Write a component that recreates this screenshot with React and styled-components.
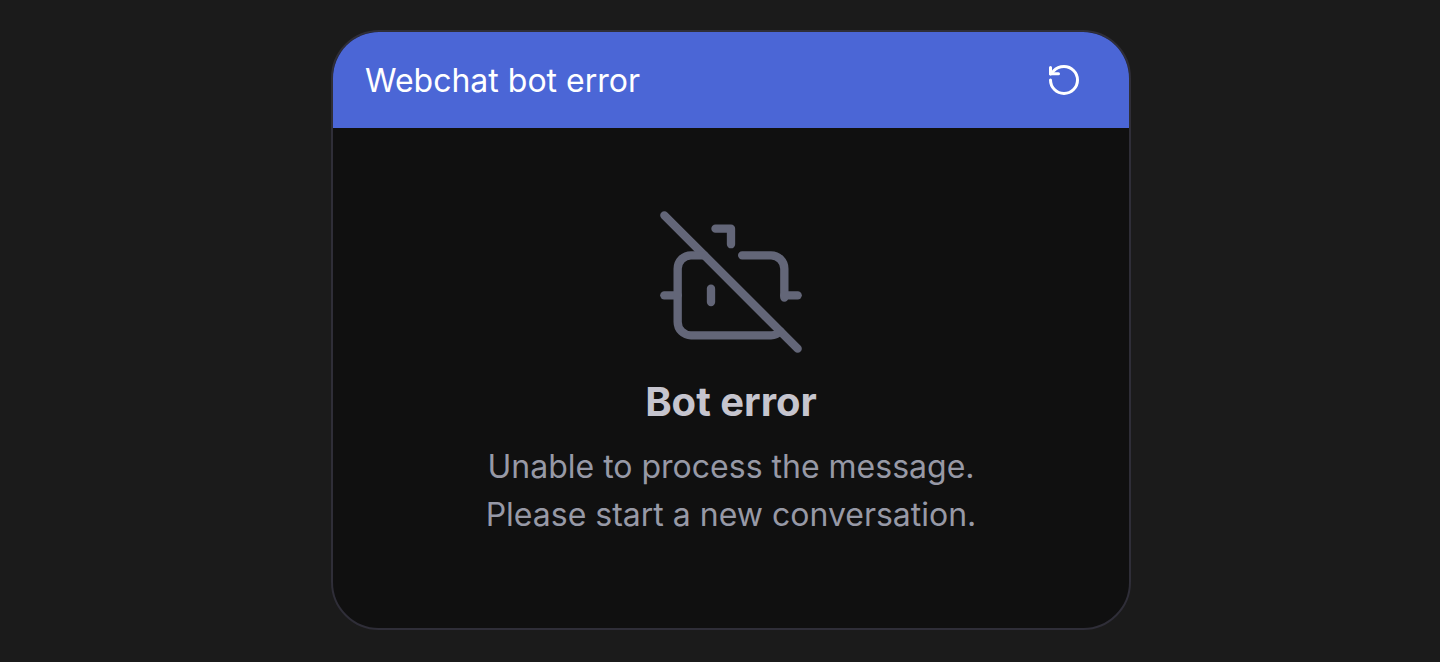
import React from "react";
import styled, { createGlobalStyle } from "styled-components";
import { BotOff } from "lucide-react";

const GlobalStyle = createGlobalStyle`
  *, *::before, *::after { box-sizing: border-box; }
  body {
    margin: 0;
    background: #1b1b1b;
    font-family: Inter, "Liberation Sans", sans-serif;
  }
`;

const Page = styled.main`
  display: flex;
  justify-content: center;
  min-height: 100vh;
  padding: 30px 30px 32px 52px;
`;

const Card = styled.section`
  display: flex;
  flex-direction: column;
  width: 100%;
  max-width: 800px;
  overflow: hidden;
  border: 2px solid #2f2e38;
  border-radius: 48px;
  background: #101010;
`;

const Header = styled.header`
  display: flex;
  align-items: center;
  justify-content: space-between;
  height: 96px;
  padding: 0 48px 0 32px;
  background: #4b66d6;
  color: #ffffff;
`;

const Title = styled.h1`
  margin: 0;
  padding-top: 2px;
  font-size: 32px;
  line-height: 48px;
  font-weight: 400;
`;

const RestartButton = styled.button`
  display: flex;
  padding: 0;
  border: 0;
  background: none;
  color: inherit;
  cursor: pointer;
`;

const Body = styled.div`
  display: flex;
  flex: 1;
  flex-direction: column;
  align-items: center;
  padding: 74px 32px 88px;
  text-align: center;
`;

const ErrorHeading = styled.h2`
  margin: 12px 0;
  color: #c6c5ce;
  font-size: 40px;
  line-height: 56px;
  font-weight: 700;
`;

const Message = styled.p`
  margin: 0;
  padding-top: 1px;
  color: #9799a6;
  font-size: 32px;
  line-height: 48px;
`;

function RestartIcon() {
  return (
    <svg width="34" height="34" viewBox="0 0 34 34" fill="none" stroke="currentColor" strokeWidth="3" strokeLinecap="round" strokeLinejoin="round" aria-hidden="true">
      <path d="M3.5 17a13.5 13.5 0 1 0 13.5-13.5c-4.5 0-8 1.8-10.5 4.5L3.5 11" />
      <path d="M3.5 4.5v6.2h8" />
    </svg>
  );
}

export default function App() {
  return (
    <>
      <GlobalStyle />
      <Page>
        <Card>
          <Header>
            <Title>Webchat bot error</Title>
            <RestartButton type="button" aria-label="Start a new conversation">
              <RestartIcon />
            </RestartButton>
          </Header>
          <Body>
            <BotOff size={160} strokeWidth={1.25} color="#636678" aria-hidden="true" />
            <ErrorHeading>Bot error</ErrorHeading>
            <Message>
              Unable to process the message.
              <br />
              Please start a new conversation.
            </Message>
          </Body>
        </Card>
      </Page>
    </>
  );
}
